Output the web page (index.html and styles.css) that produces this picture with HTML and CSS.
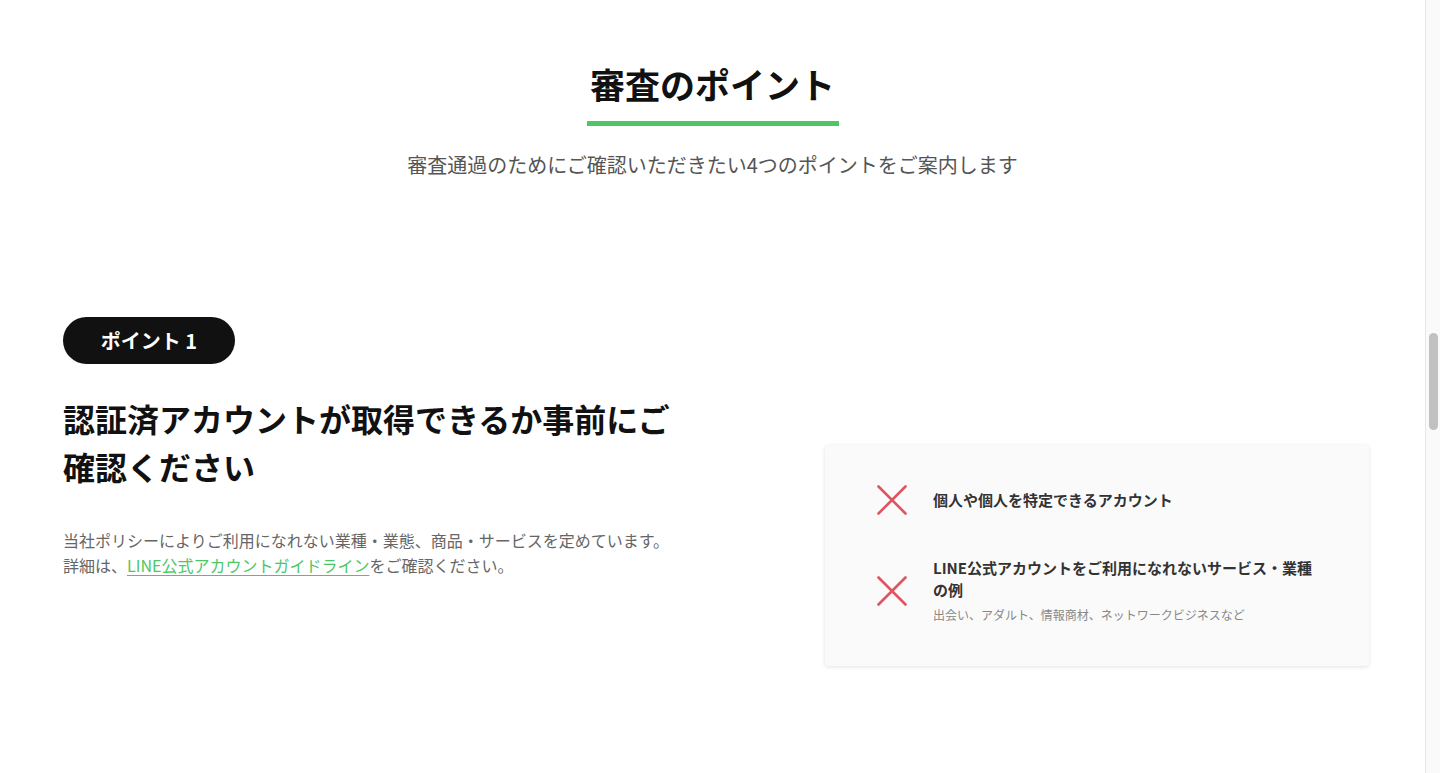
FILE: index.html
```html
<!DOCTYPE html>
<html lang="ja">
<head>
<meta charset="utf-8">
<title>審査のポイント</title>
<link rel="stylesheet" href="styles.css">
</head>
<body>
<div class="frame">
  <main class="page">
    <section class="intro">
      <h2 class="title">審査のポイント</h2>
      <p class="lead">審査通過のためにご確認いただきたい4つのポイントをご案内します</p>
    </section>
    <section class="point">
      <div class="point-text">
        <div class="badge">ポイント 1</div>
        <h3 class="point-heading">認証済アカウントが取得できるか事前にご確認ください</h3>
        <p class="point-desc">当社ポリシーによりご利用になれない業種・業態、商品・サービスを定めています。<br>詳細は、<a class="link" href="#">LINE公式アカウントガイドライン</a>をご確認ください。</p>
      </div>
      <div class="card">
        <div class="item">
          <svg class="cross" viewBox="0 0 30 30" width="30" height="30"><path d="M1.5 1.5 L28.5 28.5 M28.5 1.5 L1.5 28.5" stroke="#e0545f" stroke-width="2.6" stroke-linecap="round" fill="none"/></svg>
          <div class="item-body">
            <p class="item-title">個人や個人を特定できるアカウント</p>
          </div>
        </div>
        <div class="item">
          <svg class="cross" viewBox="0 0 30 30" width="30" height="30"><path d="M1.5 1.5 L28.5 28.5 M28.5 1.5 L1.5 28.5" stroke="#e0545f" stroke-width="2.6" stroke-linecap="round" fill="none"/></svg>
          <div class="item-body">
            <p class="item-title">LINE公式アカウントをご利用になれないサービス・業種の例</p>
            <p class="item-note">出会い、アダルト、情報商材、ネットワークビジネスなど</p>
          </div>
        </div>
      </div>
    </section>
  </main>
  <div class="scrollbar"><div class="thumb"></div></div>
</div>
</body>
</html>
```

FILE: styles.css
```css
* { box-sizing: border-box; }
html, body { margin: 0; padding: 0; height: 100%; overflow: hidden; }
body {
  font-family: "Noto Sans CJK JP", "Noto Sans", sans-serif;
  color: #111;
  background: #fff;
}
.frame {
  display: flex;
  height: 773px;
}
.page {
  flex: 1;
  min-width: 0;
}
.intro {
  display: flex;
  flex-direction: column;
  align-items: center;
  padding-top: 58px;
}
.title {
  margin: 0;
  font-size: 35px;
  font-weight: 700;
  line-height: 52px;
  white-space: nowrap;
  padding: 0 0 11px;
  border-bottom: 5px solid #4cc764;
  width: 252px;
  text-align: center;
  color: #111;
}
.lead {
  margin: 24px 0 0;
  font-size: 20px;
  line-height: 30px;
  color: #555;
}
.point {
  display: flex;
  justify-content: space-between;
  align-items: flex-start;
  padding: 137px 56px 0 63px;
}
.point-text {
  width: 640px;
}
.badge {
  display: inline-flex;
  align-items: center;
  justify-content: center;
  width: 172px;
  height: 47px;
  border-radius: 24px;
  background: #111;
  color: #fff;
  font-size: 20px;
  font-weight: 700;
}
.point-heading {
  margin: 30px 0 0;
  font-size: 32px;
  font-weight: 700;
  line-height: 48px;
  color: #111;
  width: 620px;
}
.point-desc {
  margin: 38px 0 0;
  font-size: 16px;
  line-height: 25px;
  color: #666;
}
.link {
  color: #4cc764;
  text-decoration: underline;
  text-underline-offset: 3px;
}
.card {
  width: 544px;
  margin-top: 128px;
  background: #fafafa;
  border-radius: 4px;
  box-shadow: 0 1px 4px rgba(0,0,0,0.12);
  padding: 40px 41px 42px 52px;
  display: flex;
  flex-direction: column;
  gap: 42px;
}
.item {
  display: flex;
  align-items: center;
  gap: 26px;
}
.cross {
  flex: none;
}
.item-body {
  width: 382px;
}
.item-title {
  margin: 0;
  font-size: 15px;
  font-weight: 700;
  line-height: 22px;
  color: #333;
}
.item-note {
  margin: 5px 0 0;
  font-size: 12px;
  line-height: 18px;
  color: #888;
}
.scrollbar {
  flex: none;
  width: 15px;
  height: 100%;
  background: #fafafa;
  border-left: 1px solid #e6e6e6;
  padding: 333px 2px 0 3px;
}
.thumb {
  width: 9px;
  height: 97px;
  border-radius: 5px;
  background: #c1c1c1;
}
```
